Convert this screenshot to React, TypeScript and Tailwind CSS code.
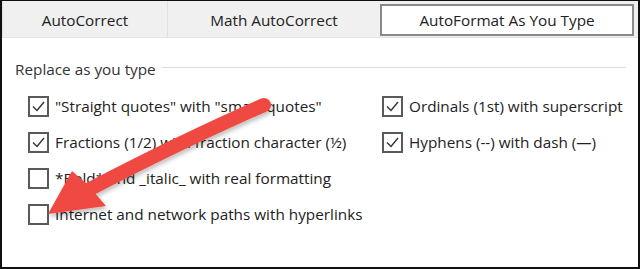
import React from "react";

const font = { fontFamily: '"Open Sans", "Noto Sans", "Liberation Sans", sans-serif' };

function Box({ checked }: { checked: boolean }) {
  return (
    <div className="w-[21px] h-[21px] border-2 border-[#5a5a5a] bg-white flex items-center justify-center shrink-0">
      {checked && (
        <svg width="15" height="15" viewBox="0 0 15 15">
          <path d="M2 7.5 L6 11.5 L13 3" fill="none" stroke="#333" strokeWidth="1.4" />
        </svg>
      )}
    </div>
  );
}

function Row({ checked, label }: { checked: boolean; label: string }) {
  return (
    <div className="flex items-center gap-[6px] h-[36px]">
      <Box checked={checked} />
      <span className="text-[15.3px] text-[#222] whitespace-nowrap">{label}</span>
    </div>
  );
}

export default function App() {
  return (
    <div
      className="relative w-[640px] h-[269px] bg-white border-2 border-t border-[#111] overflow-hidden"
      style={font}
    >
      {/* tabs */}
      <div className="flex h-[37px] bg-[#f0f0f0] border-b border-[#e2e2e2]">
        <div className="w-[166px] border-l border-[#e0e0e0] border-r flex items-center justify-center pt-[3px] text-[15.3px] text-[#222]">
          AutoCorrect
        </div>
        <div className="w-[212px] flex items-center justify-center pt-[3px] text-[15.3px] text-[#222]">
          Math AutoCorrect
        </div>
        <div className="w-[254px] mt-[3px] mb-[1px] bg-white border-2 border-[#8a8a8a] flex items-center justify-center text-[15.3px] text-[#222]">
          AutoFormat As You Type
        </div>
      </div>

      {/* group */}
      <div className="pl-[13px] pr-[12px] pt-[20px]">
        <div className="flex items-center gap-[6px]">
          <span className="text-[15.3px] text-[#333] whitespace-nowrap">Replace as you type</span>
          <div className="flex-1 h-px bg-[#dcdcdc] mt-[-4px]" />
        </div>
        <div className="grid grid-cols-[354px_1fr] pl-[13px] mt-[8px]">
          <Row checked label={'"Straight quotes" with "smart quotes"'} />
          <Row checked label="Ordinals (1st) with superscript" />
          <Row checked label="Fractions (1/2) with fraction character (½)" />
          <Row checked label="Hyphens (--) with dash (—)" />
          <Row checked={false} label="*Bold* and _italic_ with real formatting" />
          <div />
          <Row checked={false} label="Internet and network paths with hyperlinks" />
          <div />
        </div>
      </div>

      {/* arrow overlay */}
      <svg
        className="absolute left-0 top-0 pointer-events-none"
        width="640"
        height="269"
        viewBox="0 0 640 269"
      >
        <defs>
          <filter id="sh" x="-10%" y="-10%" width="120%" height="130%">
            <feDropShadow dx="1" dy="3" stdDeviation="2" floodColor="#000" floodOpacity="0.25" />
          </filter>
        </defs>
        <g filter="url(#sh)">
          <path d="M262 104 Q180 140 88 188" fill="none" stroke="#ef4a43" strokeWidth="14" strokeLinecap="round" />
          <path d="M46 213 L70 170 L86 184 L104 205 Z" fill="#ef4a43" />
        </g>
      </svg>
    </div>
  );
}
